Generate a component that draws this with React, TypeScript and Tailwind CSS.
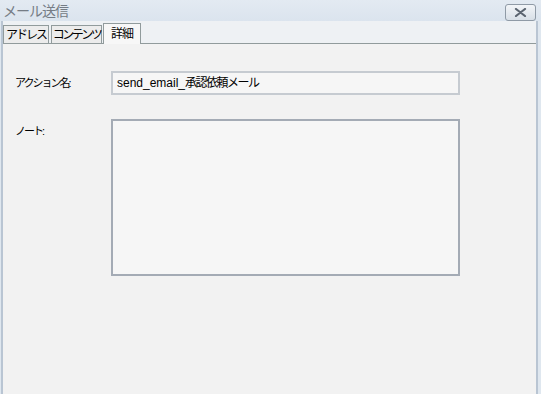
import React from "react";

export default function App() {
  const font = { fontFamily: '"Liberation Sans","Noto Sans CJK JP",sans-serif' };
  return (
    <div className="w-[541px] h-[394px] bg-[#dfe7ef] flex flex-col overflow-hidden text-[12px] text-black" style={font}>
      <div className="h-[21px] flex items-center justify-between pl-[3px] pr-[5px] bg-gradient-to-b from-[#e3eaf2] to-[#dbe4ee]">
        <span className="text-[14px] text-[#757c85] leading-none tracking-[-1px]">メール送信</span>
        <div className="w-[31px] h-[17px] mt-[3px] rounded-[3px] border border-[#8f9aa6] bg-gradient-to-b from-[#f2f5f8] to-[#d8dfe7] flex items-center justify-center">
          <svg width="13" height="9" viewBox="0 0 13 9">
            <path d="M2 1 L11 8 M11 1 L2 8" stroke="#5b6470" strokeWidth="2.2" strokeLinecap="round" />
          </svg>
        </div>
      </div>
      <div className="flex-1 flex flex-col bg-[#f1f1f1] ml-[1px] mr-[3px] border-l-2 border-r-2 border-[#b9c5d3]">
        <div className="h-[22px] flex items-end bg-[#eef1f4]">
          <div className="h-[18px] w-[46px] shrink-0 whitespace-nowrap border border-b-0 border-[#919b9c] bg-[#ececec] flex items-center justify-center text-[12px] tracking-[-2px]">アドレス</div>
          <div className="h-[18px] w-[51px] shrink-0 whitespace-nowrap ml-[2px] border border-b-0 border-[#919b9c] bg-[#ececec] flex items-center justify-center text-[12px] tracking-[-2.5px]">コンテンツ</div>
          <div className="h-[21px] w-[38px] shrink-0 whitespace-nowrap ml-[1px] border border-b-0 border-[#919b9c] bg-[#f7f7f7] flex items-center justify-center text-[12px] tracking-[-1px] relative top-[1px]">詳細</div>
          <div className="flex-1" />
        </div>
        <div className="flex-1 border-t border-[#919b9c] bg-[#f2f2f2] pt-[27px] pl-[12px]">
          <div className="flex items-start">
            <div className="w-[96px] pt-[4px] text-[11px] tracking-[-2px]">アクション名:</div>
            <div className="w-[349px] h-[24px] border-2 border-[#c6cbd1] bg-[#f6f6f6] px-[4px] flex items-center text-[12px]">
              <span>send_email_</span>
              <span className="tracking-[-1.5px]">承認依頼メール</span>
            </div>
          </div>
          <div className="flex items-start mt-[24px]">
            <div className="w-[96px] pt-[4px] text-[11px] tracking-[-2px]">ノート:</div>
            <div className="w-[349px] h-[157px] border-2 border-[#a4abb5] bg-[#f6f6f6]" />
          </div>
        </div>
      </div>
    </div>
  );
}
